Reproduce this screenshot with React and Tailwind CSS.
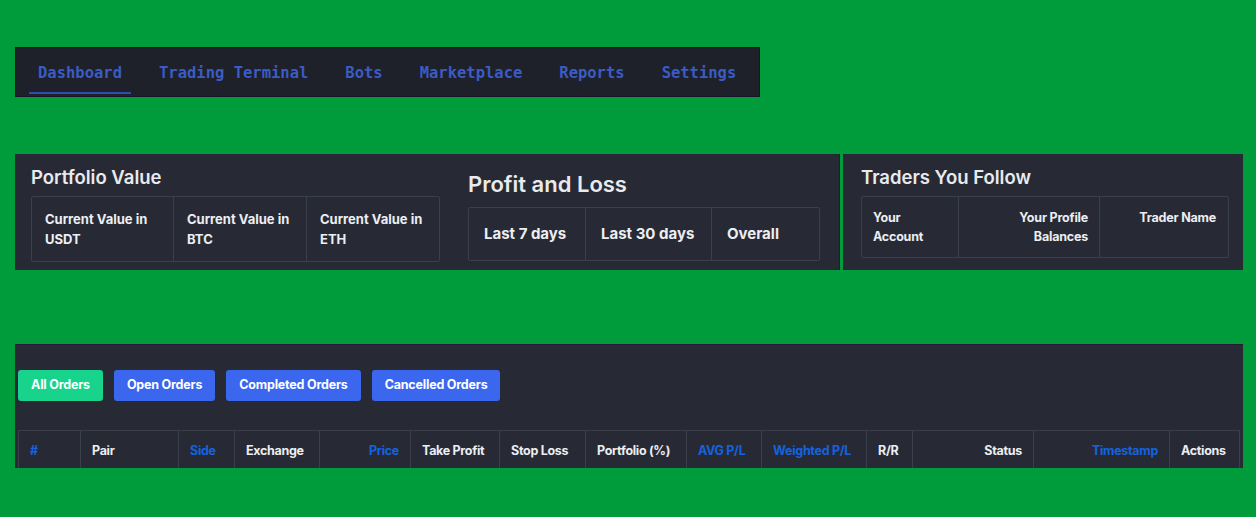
import React from "react";

const tabs = ["Dashboard", "Trading Terminal", "Bots", "Marketplace", "Reports", "Settings"];

const orderTabs = [
  { label: "All Orders", active: true },
  { label: "Open Orders" },
  { label: "Completed Orders" },
  { label: "Cancelled Orders" },
];

const columns = [
  { label: "#", w: "w-[62px]", blue: true },
  { label: "Pair", w: "w-[98px]" },
  { label: "Side", w: "w-[56px]", blue: true },
  { label: "Exchange", w: "w-[85px]" },
  { label: "Price", w: "w-[91px]", blue: true, right: true },
  { label: "Take Profit", w: "w-[89px]" },
  { label: "Stop Loss", w: "w-[86px]" },
  { label: "Portfolio (%)", w: "w-[101px]" },
  { label: "AVG P/L", w: "w-[75px]", blue: true },
  { label: "Weighted P/L", w: "w-[105px]", blue: true },
  { label: "R/R", w: "w-[46px]" },
  { label: "Status", w: "w-[121px]", right: true },
  { label: "Timestamp", w: "w-[136px]", blue: true, right: true },
  { label: "Actions", w: "flex-1" },
];

const sans = "font-['Inter','Noto_Sans',sans-serif]";

const App = () => {
  return (
    <div className={`w-[1256px] h-[517px] bg-[#009b3a] pt-[47px] ${sans}`}>
      {/* Top nav */}
      <nav className="ml-[15px] w-[745px] h-[50px] bg-[#1e2129] border border-[#1a1426] flex items-end gap-[19px] px-[13px] pb-[2px]">
        {tabs.map((t, i) => (
          <div
            key={t}
            className={`h-[40px] px-[9px] flex items-center pt-[2px] text-[15.5px] font-bold text-[#3a5cc4] font-['DejaVu_Sans_Mono',monospace] border-b-2 ${
              i === 0 ? "border-[#2f4fb0]" : "border-transparent"
            }`}
          >
            {t}
          </div>
        ))}
      </nav>

      {/* Summary cards */}
      <div className="mt-[57px] ml-[15px] flex gap-[3px] h-[116px]">
        <div className="w-[825px] bg-[#272a35] border-r border-[#1d2029] flex pl-[16px]">
          <div className="w-[409px] pt-[11px]">
            <h2 className="text-[18.5px] font-semibold text-[#e9eaee] leading-[24px]">Portfolio Value</h2>
            <div className="mt-[7px] h-[66px] flex border border-[#3b3f4b] rounded-[2px]">
              {["USDT", "BTC", "ETH"].map((c, i) => (
                <div
                  key={c}
                  className={`${i === 0 ? "w-[142px]" : "w-[133px]"} ${i < 2 ? "border-r border-[#3b3f4b]" : "flex-1"} px-[13px] pt-[12px] text-[13px] font-bold text-[#eceef2] leading-[20px]`}
                >
                  Current Value in
                  <br />
                  {c}
                </div>
              ))}
            </div>
          </div>
          <div className="ml-[28px] w-[352px] pt-[16px]">
            <h2 className="text-[22px] font-semibold text-[#e9eaee] leading-[28px]">Profit and Loss</h2>
            <div className="mt-[9px] h-[54px] flex border border-[#3b3f4b] rounded-[2px]">
              {[
                ["Last 7 days", "w-[117px]"],
                ["Last 30 days", "w-[126px]"],
                ["Overall", "flex-1"],
              ].map(([label, w], i) => (
                <div
                  key={label}
                  className={`${w} ${i < 2 ? "border-r border-[#3b3f4b]" : ""} px-[15px] flex items-center text-[15px] font-bold text-[#eceef2]`}
                >
                  {label}
                </div>
              ))}
            </div>
          </div>
        </div>

        <div className="w-[400px] bg-[#272a35] pl-[18px] pt-[11px]">
          <h2 className="text-[18.5px] font-semibold text-[#e9eaee] leading-[24px]">Traders You Follow</h2>
          <div className="mt-[7px] w-[368px] h-[62px] flex border border-[#3b3f4b] rounded-[2px] text-[12.5px] font-bold text-[#eceef2] leading-[19px] tracking-[-0.2px]">
            <div className="w-[97px] border-r border-[#3b3f4b] px-[11px] pt-[11px]">
              Your
              <br />
              Account
            </div>
            <div className="w-[141px] border-r border-[#3b3f4b] px-[11px] pt-[11px] text-right">
              Your Profile
              <br />
              Balances
            </div>
            <div className="flex-1 px-[12px] pt-[11px] text-right">Trader Name</div>
          </div>
        </div>
      </div>

      {/* Orders */}
      <div className="mt-[74px] ml-[15px] w-[1228px] h-[124px] bg-[#272a35] border-t border-[#2a1a35] px-[3px] pt-[25px]">
        <div className="flex gap-[11px]">
          {orderTabs.map((o) => (
            <button
              key={o.label}
              className={`h-[31px] px-[13px] rounded-[3px] text-[12.5px] font-bold text-white tracking-[-0.2px] ${
                o.active ? "bg-[#17d38c]" : "bg-[#3b66ee]"
              }`}
            >
              {o.label}
            </button>
          ))}
        </div>
        <div className="mt-[29px] w-[1222px] h-[38px] flex border border-[#3b3f4b] border-b-0">
          {columns.map((c, i) => (
            <div
              key={c.label}
              className={`${c.w} ${i < columns.length - 1 ? "border-r border-[#3b3f4b]" : ""} px-[11px] pt-[3px] flex items-center ${
                c.right ? "justify-end" : ""
              } text-[12.5px] font-bold tracking-[-0.3px] ${c.blue ? "text-[#1363e0]" : "text-[#eceef2]"}`}
            >
              {c.label}
            </div>
          ))}
        </div>
      </div>
    </div>
  );
};

export default App;
